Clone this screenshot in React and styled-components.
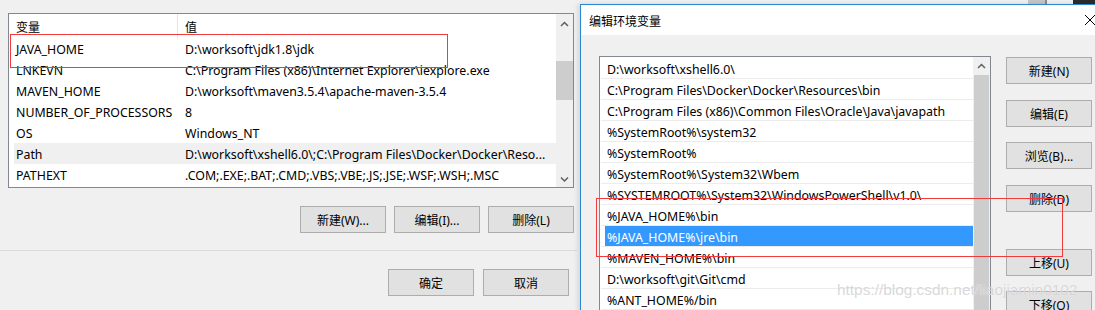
import React from "react";
import styled, { createGlobalStyle } from "styled-components";

const GlobalStyle = createGlobalStyle`
  html, body { margin: 0; padding: 0; background: #f0f0f0; }
  body { font-family: "Noto Sans", "Noto Sans CJK SC", sans-serif; font-size: 12px; color: #000; }
  * { box-sizing: border-box; }
`;

const Desktop = styled.div`
  position: relative;
  width: 1095px;
  height: 310px;
  overflow: hidden;
  background: #f0f0f0;
`;

const BackWindow = styled.div`
  width: 577px;
  height: 310px;
  padding-top: 13px;
  display: flex;
  flex-direction: column;
  background: #f0f0f0;
`;

const VarList = styled.div`
  margin-left: 8px;
  width: 566px;
  height: 175px;
  border: 1px solid #828790;
  background: #fff;
  display: flex;
`;

const ListBody = styled.div`
  flex: 1;
  padding-left: 5px;
  display: flex;
  flex-direction: column;
  overflow: hidden;
  font-size: 12.35px;
`;

const HeaderRow = styled.div`
  height: 24px;
  display: grid;
  grid-template-columns: 164px 1fr;
  align-items: stretch;
`;

const HeaderCell = styled.div`
  display: flex;
  align-items: center;
  padding-left: ${(p) => (p.$first ? "2px" : "7px")};
  padding-top: 1px;
  border-right: ${(p) => (p.$first ? "1px solid #e5e5e5" : "none")};
  font-family: "Noto Sans CJK SC", sans-serif;
  font-size: 12px;
`;

const DataRow = styled.div`
  height: 21px;
  display: grid;
  grid-template-columns: 169px 1fr;
  align-items: center;
  padding-top: 1px;
  background: ${(p) => (p.$hl ? "#f0f0f0" : "transparent")};
`;

const Cell = styled.div`
  padding-left: 2px;
  white-space: nowrap;
  overflow: hidden;
`;

const ScrollBar = styled.div`
  width: 17px;
  background: #f0f0f0;
  display: flex;
  flex-direction: column;
`;

const ArrowBox = styled.div`
  height: ${(p) => p.$h || 17}px;
  display: flex;
  align-items: center;
  justify-content: center;
  flex-shrink: 0;
`;

const Track = styled.div`
  flex: 1;
  padding-top: ${(p) => p.$offset}px;
  display: flex;
  flex-direction: column;
  align-items: center;
`;

const Thumb = styled.div`
  width: ${(p) => p.$w || 17}px;
  height: ${(p) => (p.$fill ? "100%" : `${p.$h}px`)};
  flex: ${(p) => (p.$fill ? 1 : "none")};
  background: #cdcdcd;
`;

const ButtonRow = styled.div`
  display: flex;
  justify-content: flex-end;
  gap: ${(p) => p.$gap}px;
  margin-top: ${(p) => p.$top}px;
  margin-left: ${(p) => p.$left || 0}px;
  width: ${(p) => p.$width}px;
`;

const WinButton = styled.button`
  width: 86px;
  height: 27px;
  padding: 0;
  margin: 0;
  margin-top: ${(p) => p.$mt || 0}px;
  background: #e1e1e1;
  border: 1px solid #adadad;
  font-family: "Noto Sans", "Noto Sans CJK SC", sans-serif;
  font-size: 12px;
  color: #000;
  flex-shrink: 0;
`;

const Separator = styled.div`
  margin-top: 17px;
  height: 1px;
  background: #dadada;
  width: 577px;
`;

const Dialog = styled.div`
  position: absolute;
  left: 580px;
  top: 4px;
  width: 534px;
  height: 330px;
  border: 1px solid #2a87d3;
  background: #f0f0f0;
  box-shadow: -2px 0 5px rgba(0, 0, 0, 0.12);
  display: flex;
  flex-direction: column;
`;

const TitleBar = styled.div`
  height: 30px;
  background: #fff;
  display: flex;
  align-items: center;
  padding-left: 8px;
`;

const Title = styled.div`
  flex: 1;
  font-family: "Noto Sans CJK SC", sans-serif;
  font-size: 12px;
  padding-top: 1px;
`;

const CloseBtn = styled.div`
  width: 46px;
  height: 30px;
  display: flex;
  align-items: center;
  justify-content: center;
`;

const DialogBody = styled.div`
  display: flex;
  padding: 21px 0 0 18px;
  gap: 15px;
`;

const PathList = styled.div`
  width: 392px;
  height: 280px;
  border: 1px solid #828790;
  background: #fff;
  display: flex;
`;

const PathItems = styled.div`
  flex: 1;
  padding-top: 1px;
  padding-left: 1px;
  display: flex;
  flex-direction: column;
  overflow: hidden;
  font-size: 12.35px;
`;

const PathRow = styled.div`
  height: 21px;
  flex-shrink: 0;
  display: flex;
  padding-left: 4px;
  border-bottom: 1px solid #ececec;
`;

const PathFill = styled.div`
  flex: 1;
  display: flex;
  align-items: center;
  padding-left: 2px;
  padding-top: 2px;
  white-space: nowrap;
  background: ${(p) => (p.$sel ? "#3399ff" : "transparent")};
  color: ${(p) => (p.$sel ? "#fff" : "#000")};
`;

const ButtonColumn = styled.div`
  display: flex;
  flex-direction: column;
  padding-top: 1px;
`;

const Annotation = styled.div`
  position: absolute;
  left: ${(p) => p.$x}px;
  top: ${(p) => p.$y}px;
  width: ${(p) => p.$w}px;
  height: ${(p) => p.$h}px;
  border: 1px solid #f23a3a;
  pointer-events: none;
  z-index: 5;
`;

const Watermark = styled.div`
  position: absolute;
  left: 837px;
  top: 281px;
  font-family: "Liberation Sans", Arial, sans-serif;
  font-size: 15.4px;
  color: rgba(190, 190, 190, 0.6);
  text-shadow: 0 0 1px rgba(255, 255, 255, 0.9);
  white-space: nowrap;
  z-index: 6;
  pointer-events: none;
`;

const BehindStrip = styled.div`
  position: absolute;
  left: 830px;
  top: 0;
  width: 265px;
  height: 4px;
  display: flex;
  background: #f0f0f0;
`;

const StripPiece = styled.div`
  width: ${(p) => p.$w}px;
  flex: ${(p) => (p.$grow ? 1 : "none")};
  background: ${(p) => p.$c};
`;

const Chevron = ({ down }) => (
  <svg width="9" height="6" viewBox="0 0 9 6">
    <polyline
      points={down ? "1,1.5 4.5,5 8,1.5" : "1,5 4.5,1.5 8,5"}
      fill="none"
      stroke="#606060"
      strokeWidth="1.5"
    />
  </svg>
);

const CloseIcon = () => (
  <svg width="10" height="10" viewBox="0 0 10 10">
    <line x1="0" y1="0" x2="10" y2="10" stroke="#000" strokeWidth="1" />
    <line x1="10" y1="0" x2="0" y2="10" stroke="#000" strokeWidth="1" />
  </svg>
);

const vars = [
  ["JAVA_HOME", "D:\\worksoft\\jdk1.8\\jdk"],
  ["LNKEVN", "C:\\Program Files (x86)\\Internet Explorer\\iexplore.exe"],
  ["MAVEN_HOME", "D:\\worksoft\\maven3.5.4\\apache-maven-3.5.4"],
  ["NUMBER_OF_PROCESSORS", "8"],
  ["OS", "Windows_NT"],
  ["Path", "D:\\worksoft\\xshell6.0\\;C:\\Program Files\\Docker\\Docker\\Reso..."],
  ["PATHEXT", ".COM;.EXE;.BAT;.CMD;.VBS;.VBE;.JS;.JSE;.WSF;.WSH;.MSC"],
];

const paths = [
  "D:\\worksoft\\xshell6.0\\",
  "C:\\Program Files\\Docker\\Docker\\Resources\\bin",
  "C:\\Program Files (x86)\\Common Files\\Oracle\\Java\\javapath",
  "%SystemRoot%\\system32",
  "%SystemRoot%",
  "%SystemRoot%\\System32\\Wbem",
  "%SYSTEMROOT%\\System32\\WindowsPowerShell\\v1.0\\",
  "%JAVA_HOME%\\bin",
  "%JAVA_HOME%\\jre\\bin",
  "%MAVEN_HOME%\\bin",
  "D:\\worksoft\\git\\Git\\cmd",
  "%ANT_HOME%/bin",
];

const sideButtons = [
  ["新建(N)", 0],
  ["编辑(E)", 16],
  ["浏览(B)...", 15],
  ["删除(D)", 16],
  ["上移(U)", 37],
  ["下移(O)", 15],
];

export default function App() {
  return (
    <>
      <GlobalStyle />
      <Desktop>
        <BackWindow>
          <VarList>
            <ListBody>
              <HeaderRow>
                <HeaderCell $first>变量</HeaderCell>
                <HeaderCell>值</HeaderCell>
              </HeaderRow>
              {vars.map(([k, v]) => (
                <DataRow key={k} $hl={k === "Path"}>
                  <Cell>{k}</Cell>
                  <Cell>{v}</Cell>
                </DataRow>
              ))}
            </ListBody>
            <ScrollBar>
              <ArrowBox $h={20}>
                <Chevron />
              </ArrowBox>
              <Track $offset={27}>
                <Thumb $h={39} />
              </Track>
              <ArrowBox $h={17}>
                <Chevron down />
              </ArrowBox>
            </ScrollBar>
          </VarList>
          <ButtonRow $gap={8} $top={18} $left={8} $width={566}>
            <WinButton>新建(W)...</WinButton>
            <WinButton>编辑(I)...</WinButton>
            <WinButton>删除(L)</WinButton>
          </ButtonRow>
          <Separator />
          <ButtonRow $gap={9} $top={18} $width={569}>
            <WinButton>确定</WinButton>
            <WinButton>取消</WinButton>
          </ButtonRow>
        </BackWindow>

        <BehindStrip>
          <StripPiece $w={198} $c="#f0f0f0" />
          <StripPiece $w={17} $c="#c5c5c5" />
          <StripPiece $w={2} $c="#8a8a8a" />
          <StripPiece $w={26} $c="#f0f0f0" />
          <StripPiece $grow $c="#2b2b2b" />
        </BehindStrip>

        <Dialog>
          <TitleBar>
            <Title>编辑环境变量</Title>
            <CloseBtn>
              <CloseIcon />
            </CloseBtn>
          </TitleBar>
          <DialogBody>
            <PathList>
              <PathItems>
                {paths.map((p) => (
                  <PathRow key={p}>
                    <PathFill $sel={p === "%JAVA_HOME%\\jre\\bin"}>{p}</PathFill>
                  </PathRow>
                ))}
              </PathItems>
              <ScrollBar>
                <ArrowBox $h={18}>
                  <Chevron />
                </ArrowBox>
                <Track $offset={0}>
                  <Thumb $w={15} $fill />
                </Track>
              </ScrollBar>
            </PathList>
            <ButtonColumn>
              {sideButtons.map(([label, mt]) => (
                <WinButton key={label} $mt={mt}>
                  {label}
                </WinButton>
              ))}
            </ButtonColumn>
          </DialogBody>
        </Dialog>

        <Annotation $x={10} $y={34} $w={438} $h={34} />
        <Annotation $x={596} $y={198} $w={467} $h={59} />
        <Watermark>https://blog.csdn.net/liaojiamin0102</Watermark>
      </Desktop>
    </>
  );
}
